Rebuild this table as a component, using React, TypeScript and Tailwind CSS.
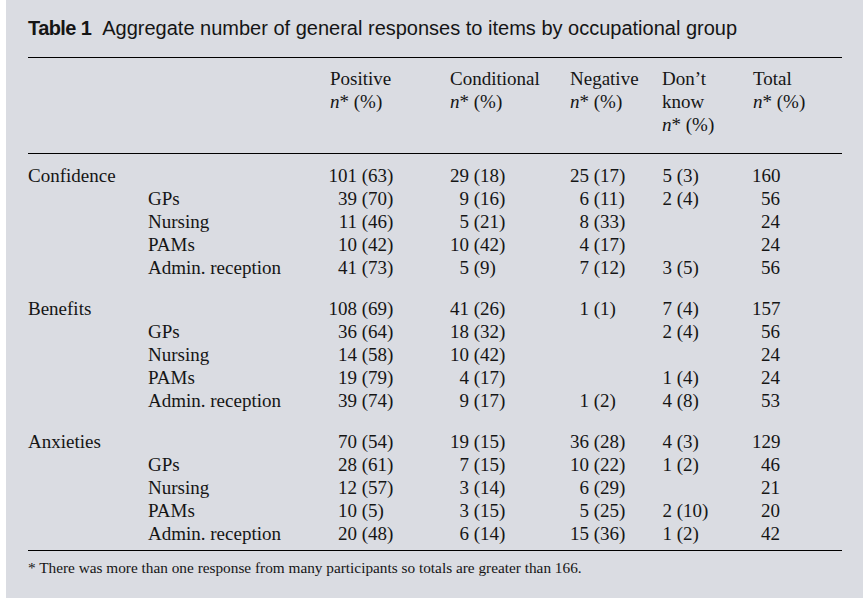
import React from "react";

type Pair = [string, string] | null;

interface Row {
  group?: string;
  sub?: string;
  cells: [Pair, Pair, Pair, Pair];
  total: string;
}

const GROUPS: Row[][] = [
  [
    { group: "Confidence", cells: [["101", "63"], ["29", "18"], ["25", "17"], ["5", "3"]], total: "160" },
    { sub: "GPs", cells: [["39", "70"], ["9", "16"], ["6", "11"], ["2", "4"]], total: "56" },
    { sub: "Nursing", cells: [["11", "46"], ["5", "21"], ["8", "33"], null], total: "24" },
    { sub: "PAMs", cells: [["10", "42"], ["10", "42"], ["4", "17"], null], total: "24" },
    { sub: "Admin. reception", cells: [["41", "73"], ["5", "9"], ["7", "12"], ["3", "5"]], total: "56" },
  ],
  [
    { group: "Benefits", cells: [["108", "69"], ["41", "26"], ["1", "1"], ["7", "4"]], total: "157" },
    { sub: "GPs", cells: [["36", "64"], ["18", "32"], null, ["2", "4"]], total: "56" },
    { sub: "Nursing", cells: [["14", "58"], ["10", "42"], null, null], total: "24" },
    { sub: "PAMs", cells: [["19", "79"], ["4", "17"], null, ["1", "4"]], total: "24" },
    { sub: "Admin. reception", cells: [["39", "74"], ["9", "17"], ["1", "2"], ["4", "8"]], total: "53" },
  ],
  [
    { group: "Anxieties", cells: [["70", "54"], ["19", "15"], ["36", "28"], ["4", "3"]], total: "129" },
    { sub: "GPs", cells: [["28", "61"], ["7", "15"], ["10", "22"], ["1", "2"]], total: "46" },
    { sub: "Nursing", cells: [["12", "57"], ["3", "14"], ["6", "29"], null], total: "21" },
    { sub: "PAMs", cells: [["10", "5"], ["3", "15"], ["5", "25"], ["2", "10"]], total: "20" },
    { sub: "Admin. reception", cells: [["20", "48"], ["6", "14"], ["15", "36"], ["1", "2"]], total: "42" },
  ],
];

// width of the right-aligned number part per column, so the brackets line up
const NUM_W = ["w-[29px]", "w-[19px]", "w-[19px]", "w-[10px]"];

const GRID = "grid grid-cols-[120px_180px_122px_120px_92px_90px_90px]";

function NStar() {
  return (
    <span>
      <i>n</i>* (%)
    </span>
  );
}

function Cell({ pair, numW }: { pair: Pair; numW: string }) {
  if (!pair) return <div />;
  return (
    <div className="whitespace-nowrap">
      <span className={`inline-block text-right ${numW}`}>{pair[0]}</span>
      <span> ({pair[1]})</span>
    </div>
  );
}

export default function App() {
  return (
    <div className="w-[863px] h-[607px] bg-white">
      <div className="h-[598px] bg-[#dadce2] ml-[6px] pl-[22px] pt-[15px] text-[#151515]">
        {/* Caption */}
        <h1 className="font-['Liberation_Sans',Arial,sans-serif] text-[20px] leading-[26px] whitespace-nowrap">
          <span className="font-bold tracking-[-0.6px]">Table 1</span>
          <span className="ml-[11px]">Aggregate number of general responses to items by occupational group</span>
        </h1>

        <div className="w-[814px] mt-[16px] font-['Liberation_Serif','Times_New_Roman',serif] text-[19px] leading-[23px]">
          {/* Column headings */}
          <div className={`${GRID} border-t border-black pt-[9px] pb-[17px]`}>
            <div />
            <div />
            <div className="pl-[2px]">
              Positive
              <br />
              <NStar />
            </div>
            <div>
              Conditional
              <br />
              <NStar />
            </div>
            <div>
              Negative
              <br />
              <NStar />
            </div>
            <div>
              Don’t
              <br />
              know
              <br />
              <NStar />
            </div>
            <div className="pl-[1px]">
              Total
              <br />
              <NStar />
            </div>
          </div>

          {/* Body */}
          <div className="border-t border-black pt-[10px] pb-[5px] flex flex-col gap-[18px]">
            {GROUPS.map((rows, gi) => (
              <div key={gi}>
                {rows.map((r, ri) => (
                  <div key={ri} className={GRID}>
                    <div>{r.group ?? ""}</div>
                    <div>{r.sub ?? ""}</div>
                    {r.cells.map((c, ci) => (
                      <Cell key={ci} pair={c} numW={NUM_W[ci]} />
                    ))}
                    <div>
                      <span className="inline-block w-[28px] text-right">{r.total}</span>
                    </div>
                  </div>
                ))}
              </div>
            ))}
          </div>

          {/* Footnote */}
          <div className="border-t border-black pt-[8px] text-[15.3px] leading-[17px]">
            * There was more than one response from many participants so totals are greater than 166.
          </div>
        </div>
      </div>
    </div>
  );
}
